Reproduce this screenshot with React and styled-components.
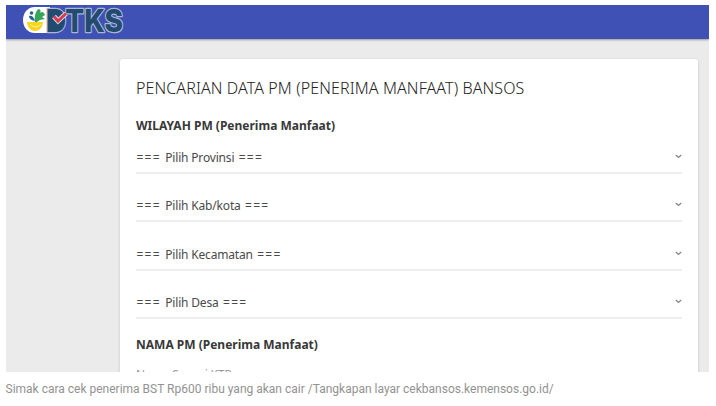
import React from 'react';
import styled, { createGlobalStyle } from 'styled-components';

const GlobalStyle = createGlobalStyle`
  * { box-sizing: border-box; }
  body { margin: 0; background: #fff; overflow: hidden; }
`;

const Figure = styled.figure`
  margin: 0;
  padding: 5px 7px 0 6px;
  height: 406px;
`;

const Screen = styled.div`
  height: 367px;
  overflow: hidden;
  background: #ebebeb;
  font-family: 'Noto Sans', 'Open Sans', sans-serif;
`;

const Header = styled.header`
  height: 34px;
  padding-left: 15px;
  background: #3f51b5;
  box-shadow: 0 1px 2px rgba(0, 0, 0, 0.35);
`;

const Logo = styled.svg`
  display: block;
  overflow: visible;
`;

const Wordmark = styled.text`
  font-family: Inter, 'Liberation Sans', sans-serif;
  font-weight: 800;
  font-size: 31px;
  fill: #234b70;
  stroke: #a9b7d2;
  stroke-width: 2.4px;
  stroke-linejoin: round;
  paint-order: stroke;
`;

const Card = styled.main`
  height: 400px;
  margin: 20px 11px 0 114px;
  padding: 16px 16px 0;
  background: #fff;
  border-radius: 3px;
  box-shadow: 0 1px 3px rgba(0, 0, 0, 0.18);
`;

const Title = styled.h1`
  margin: 0;
  height: 26px;
  font-size: 16px;
  line-height: 26px;
  font-weight: 300;
  letter-spacing: 0.11px;
  color: #222;
  white-space: nowrap;
`;

const Label = styled.h2`
  margin: 0;
  height: 20px;
  padding-top: ${(p) => p.$top}px;
  box-sizing: content-box;
  font-size: 12px;
  line-height: 20px;
  font-weight: 700;
  color: #383838;
  white-space: nowrap;
`;

const Select = styled.div`
  display: flex;
  align-items: flex-end;
  justify-content: space-between;
  height: 48.4px;
  padding-bottom: 5px;
  border-bottom: 2px solid #eee;
  font-size: 12px;
  line-height: 18px;
  color: #4a4a4a;
  white-space: nowrap;

  &:first-child { height: 38px; }
`;

const Option = styled.span`
  display: flex;
  gap: 4.4px;
  padding-left: 0.4px;
  letter-spacing: -0.18px;
`;

const Equals = styled.span`
  letter-spacing: 1.3px;
`;

const Fields = styled.div``;

const Chevron = styled.svg`
  flex: none;
  margin-bottom: 8px;
`;

const Placeholder = styled.div`
  margin-top: 11px;
  font-size: 12px;
  line-height: 18px;
  letter-spacing: -0.15px;
  color: #999;
`;

const Caption = styled.figcaption`
  margin-top: 8px;
  margin-left: -0.5px;
  font-family: Roboto, sans-serif;
  font-size: 12px;
  line-height: 18px;
  color: #929292;
  white-space: nowrap;
`;

const options = ['Pilih Provinsi', 'Pilih Kab/kota', 'Pilih Kecamatan', 'Pilih Desa'];

function DtksLogo() {
  return (
    <Logo width="110" height="34" viewBox="0 0 110 34" aria-label="DTKS">
      <path d="M14 2H29V28H14C-2 28 -2 2 14 2Z" fill="#fff" />
      <path d="M6 17H22C21 29 7 29 6 17Z" fill="#f5d51e" />
      <path d="M9 19Q15 25 20 19" fill="none" stroke="#fff1a0" />
      <path d="M14 17C13 11 15 5 18 4C20 5 20 6 19 8C21 6 23 7 24 10L21 12L24 14C21 15 19 14 16 17Z" fill="#38a65a" />
      <path d="M14 16Q8 15 8 11Q12 10 14 16Z" fill="#29628a" />
      <circle cx="10.5" cy="8" r="1.8" fill="#29628a" />
      <Wordmark x="25" y="26.5" textLength="77" lengthAdjust="spacingAndGlyphs">DTKS</Wordmark>
      <path d="M30 7H35C44 7 44 24 35 24H30Z" fill="#234b70" />
      <path d="M33 11.5L37 16L45 8.5" fill="none" stroke="#d9dfeb" strokeWidth="5" />
      <path d="M33 11.5L37 16L45 8.5" fill="none" stroke="#d83a50" strokeWidth="3" />
    </Logo>
  );
}

export default function App() {
  return (
    <>
      <GlobalStyle />
      <Figure>
        <Screen>
          <Header><DtksLogo /></Header>
          <Card>
            <Title>PENCARIAN DATA PM (PENERIMA MANFAAT) BANSOS</Title>
            <Label $top={15}>WILAYAH PM (Penerima Manfaat)</Label>
            <Fields>
              {options.map((name) => (
                <Select key={name}>
                  <Option>
                    <Equals>===</Equals>
                    <span>{name}</span>
                    <Equals>===</Equals>
                  </Option>
                  <Chevron width="7" height="5" viewBox="0 0 7 5">
                    <path d="M0.8 1L3.5 3.4L6.2 1" fill="none" stroke="#858585" strokeWidth="1.3" />
                  </Chevron>
                </Select>
              ))}
            </Fields>
            <Label $top={16}>NAMA PM (Penerima Manfaat)</Label>
            <Placeholder>Nama Sesuai KTP</Placeholder>
          </Card>
        </Screen>
        <Caption>Simak cara cek penerima BST Rp600 ribu yang akan cair /Tangkapan layar cekbansos.kemensos.go.id/</Caption>
      </Figure>
    </>
  );
}
